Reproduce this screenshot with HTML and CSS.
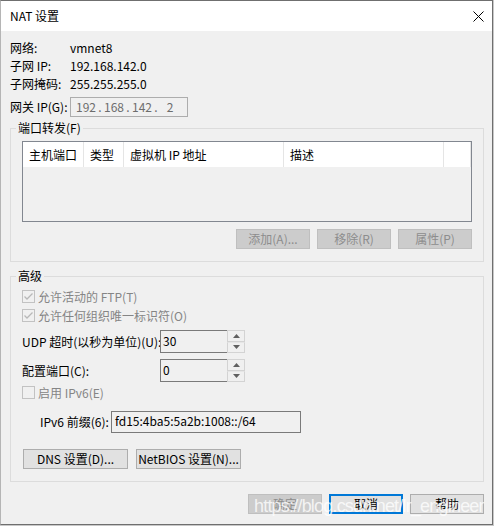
FILE: index.html
```html
<!DOCTYPE html>
<html lang="zh-CN">
<head>
<meta charset="utf-8">
<title>NAT 设置</title>
<link rel="stylesheet" href="styles.css">
</head>
<body>
<div class="window">
  <div class="titlebar">
    <span class="title">NAT 设置</span>
    <svg class="close" width="11" height="11" viewBox="0 0 11 11"><path d="M0.5 0.5 L10.5 10.5 M10.5 0.5 L0.5 10.5" stroke="#000" stroke-width="1" fill="none"/></svg>
  </div>
  <div class="content">
    <div class="info">
      <span>网络:</span><span>vmnet8</span>
      <span>子网 IP:</span><span>192.168.142.0</span>
      <span>子网掩码:</span><span>255.255.255.0</span>
    </div>
    <div class="gw-row">
      <span class="gw-lbl">网关 IP(G):</span>
      <div class="ipbox">
        <span class="ipseg">192</span><span class="ipdot">.</span>
        <span class="ipseg">168</span><span class="ipdot">.</span>
        <span class="ipseg">142</span><span class="ipdot">.</span>
        <span class="ipseg">2</span>
      </div>
    </div>

    <fieldset class="group g1">
      <legend>端口转发(F)</legend>
      <div class="lv">
        <div class="lv-head">
          <div class="lv-col c1">主机端口</div>
          <div class="lv-col c2">类型</div>
          <div class="lv-col c3">虚拟机 IP 地址</div>
          <div class="lv-col c4">描述</div>
          <div class="lv-col c5"></div>
        </div>
      </div>
      <div class="btnrow">
        <div class="btn disabled">添加(A)...</div>
        <div class="btn disabled">移除(R)</div>
        <div class="btn disabled">属性(P)</div>
      </div>
    </fieldset>

    <fieldset class="group g2">
      <legend>高级</legend>
      <div class="adv">
        <div class="cbrow">
          <svg class="cb" width="13" height="13" viewBox="0 0 13 13"><rect x="0.5" y="0.5" width="12" height="12" fill="#f0f0f0" stroke="#c2c2c2"/><path d="M2.5 6.5 L5 9 L10.5 3.5" stroke="#b8b8b8" stroke-width="1.3" fill="none"/></svg>
          <span>允许活动的 FTP(T)</span>
        </div>
        <div class="cbrow">
          <svg class="cb" width="13" height="13" viewBox="0 0 13 13"><rect x="0.5" y="0.5" width="12" height="12" fill="#f0f0f0" stroke="#c2c2c2"/><path d="M2.5 6.5 L5 9 L10.5 3.5" stroke="#b8b8b8" stroke-width="1.3" fill="none"/></svg>
          <span>允许任何组织唯一标识符(O)</span>
        </div>
        <div class="spinrow r1">
          <span class="spin-lbl">UDP 超时(以秒为单位)(U):</span>
          <div class="spin">
            <div class="spin-edit">30</div>
            <div class="spin-btns">
              <div class="sb"><svg width="7" height="4" viewBox="0 0 7 4"><path d="M0 4 L3.5 0 L7 4 Z" fill="#606060"/></svg></div>
              <div class="sb"><svg width="7" height="4" viewBox="0 0 7 4"><path d="M0 0 L3.5 4 L7 0 Z" fill="#606060"/></svg></div>
            </div>
          </div>
        </div>
        <div class="spinrow r2">
          <span class="spin-lbl">配置端口(C):</span>
          <div class="spin">
            <div class="spin-edit">0</div>
            <div class="spin-btns">
              <div class="sb"><svg width="7" height="4" viewBox="0 0 7 4"><path d="M0 4 L3.5 0 L7 4 Z" fill="#606060"/></svg></div>
              <div class="sb"><svg width="7" height="4" viewBox="0 0 7 4"><path d="M0 0 L3.5 4 L7 0 Z" fill="#606060"/></svg></div>
            </div>
          </div>
        </div>
        <div class="cbrow cb3">
          <svg class="cb" width="13" height="13" viewBox="0 0 13 13"><rect x="0.5" y="0.5" width="12" height="12" fill="#f0f0f0" stroke="#c2c2c2"/></svg>
          <span>启用 IPv6(E)</span>
        </div>
        <div class="v6row">
          <span class="v6-lbl">IPv6 前缀(6):</span>
          <div class="v6box">fd15:4ba5:5a2b:1008::/64</div>
        </div>
        <div class="dnsrow">
          <div class="btn wide">DNS 设置(D)...</div>
          <div class="btn wide">NetBIOS 设置(N)...</div>
        </div>
      </div>
    </fieldset>

    <div class="footer">
      <div class="btn disabled">确定</div>
      <div class="btn focused">取消</div>
      <div class="btn">帮助</div>
    </div>
  </div>
  <div class="watermark">https://blog.csdn.net/lr_engineer</div>
</div>
</body>
</html>
```
FILE: styles.css
```css
html, body {
  margin: 0;
  padding: 0;
  background: #c8c8c8;
}
body {
  font-family: "Noto Sans CJK SC", "Liberation Sans", sans-serif;
  font-size: 12px;
  color: #000;
}
.window {
  position: relative;
  width: 493px;
  height: 525px;
  box-sizing: border-box;
  border: 1px solid #6f6f6f;
  border-left-color: #b5b5b5;
  background: #f0f0f0;
  overflow: hidden;
}
.titlebar {
  height: 30px;
  background: #fff;
  display: flex;
  align-items: center;
  justify-content: space-between;
  padding: 0 8px 0 9px;
}
.title {
  line-height: 16px;
}
.close {
  display: block;
  margin-top: 1px;
}
.content {
  padding: 8px 8px 0 9px;
}
.info {
  display: grid;
  grid-template-columns: 60px auto;
  grid-auto-rows: 18px;
  align-items: center;
  line-height: 16px;
}
.gw-row {
  display: flex;
  align-items: center;
  height: 20px;
  margin-top: 4px;
}
.gw-lbl {
  width: 60px;
  white-space: nowrap;
  line-height: 16px;
}
.ipbox {
  width: 118px;
  height: 20px;
  box-sizing: border-box;
  border: 1px solid #adadad;
  display: flex;
  align-items: center;
  padding-left: 3px;
  color: #6d6d6d;
  line-height: 16px;
}
.ipseg {
  width: 24px;
  text-align: center;
}
.ipdot {
  width: 4px;
  text-align: center;
}
.group {
  margin: 4px 0 0;
  padding: 0;
  border: 1px solid #dcdcdc;
  min-width: 0;
}
.group legend {
  margin-left: 5px;
  padding: 0 2px;
  line-height: 14px;
}
.g2 {
  margin-top: 7px;
}
.lv {
  margin: 6px 11px 0;
  height: 81px;
  box-sizing: border-box;
  border: 1px solid #828790;
}
.lv-head {
  display: flex;
  height: 25px;
  background: #fff;
}
.lv-col {
  box-sizing: border-box;
  border-right: 1px solid #e5e5e5;
  padding-left: 6px;
  line-height: 25px;
  white-space: nowrap;
}
.c1 { width: 61px; }
.c2 { width: 40px; }
.c3 { width: 160px; }
.c4 { width: 160px; }
.c5 { flex: 1; }
.btnrow {
  display: flex;
  justify-content: flex-end;
  gap: 7px;
  margin: 7px 11px 0;
  padding-bottom: 12px;
}
.btn {
  width: 74px;
  height: 20px;
  box-sizing: border-box;
  border: 1px solid #adadad;
  background: #e1e1e1;
  line-height: 18px;
  text-align: center;
  white-space: nowrap;
}
.btn.disabled {
  background: #cccccc;
  border-color: #bfbfbf;
  color: #8d8d8d;
}
.btn.focused {
  border: 2px solid #0078d7;
  line-height: 16px;
}
.btn.wide {
  width: 105px;
}
.adv {
  padding: 4px 11px 12px;
}
.cbrow {
  display: flex;
  align-items: center;
  gap: 3px;
  height: 19px;
  color: #858585;
  line-height: 16px;
}
.cb {
  display: block;
  flex: none;
}
.cb3 {
  margin-top: 1px;
}
.spinrow {
  display: flex;
  align-items: center;
  height: 23px;
  margin-top: 5px;
  line-height: 16px;
}
.spinrow.r2 {
  margin-top: 6px;
}
.spin-lbl {
  width: 138px;
  white-space: nowrap;
}
.spin {
  display: flex;
  width: 85px;
  height: 23px;
}
.spin-edit {
  flex: 1;
  border: 1px solid #7a7a7a;
  border-right: none;
  padding-left: 2px;
  line-height: 19px;
}
.spin-btns {
  width: 18px;
  display: flex;
  flex-direction: column;
}
.sb {
  flex: 1;
  box-sizing: border-box;
  border: 1px solid #d3d3d3;
  display: flex;
  align-items: center;
  justify-content: center;
}
.sb + .sb {
  border-top-color: #e6e6e6;
}
.sb svg {
  display: block;
}
.v6row {
  display: flex;
  align-items: center;
  height: 22px;
  margin-top: 9px;
  padding-left: 18px;
  line-height: 16px;
}
.v6-lbl {
  width: 71px;
  white-space: nowrap;
}
.v6box {
  width: 190px;
  height: 22px;
  box-sizing: border-box;
  border: 1px solid #7a7a7a;
  padding-left: 3px;
  line-height: 18px;
}
.dnsrow {
  display: flex;
  gap: 8px;
  margin-top: 16px;
  padding-left: 1px;
}
.footer {
  display: flex;
  justify-content: flex-end;
  gap: 7px;
  margin-top: 12px;
}
.watermark {
  position: absolute;
  left: 253px;
  top: 496px;
  font-family: "Liberation Sans", sans-serif;
  font-size: 18px;
  line-height: 18px;
  letter-spacing: -0.8px;
  color: rgba(255, 255, 255, 0.78);
  white-space: nowrap;
  pointer-events: none;
}
```
